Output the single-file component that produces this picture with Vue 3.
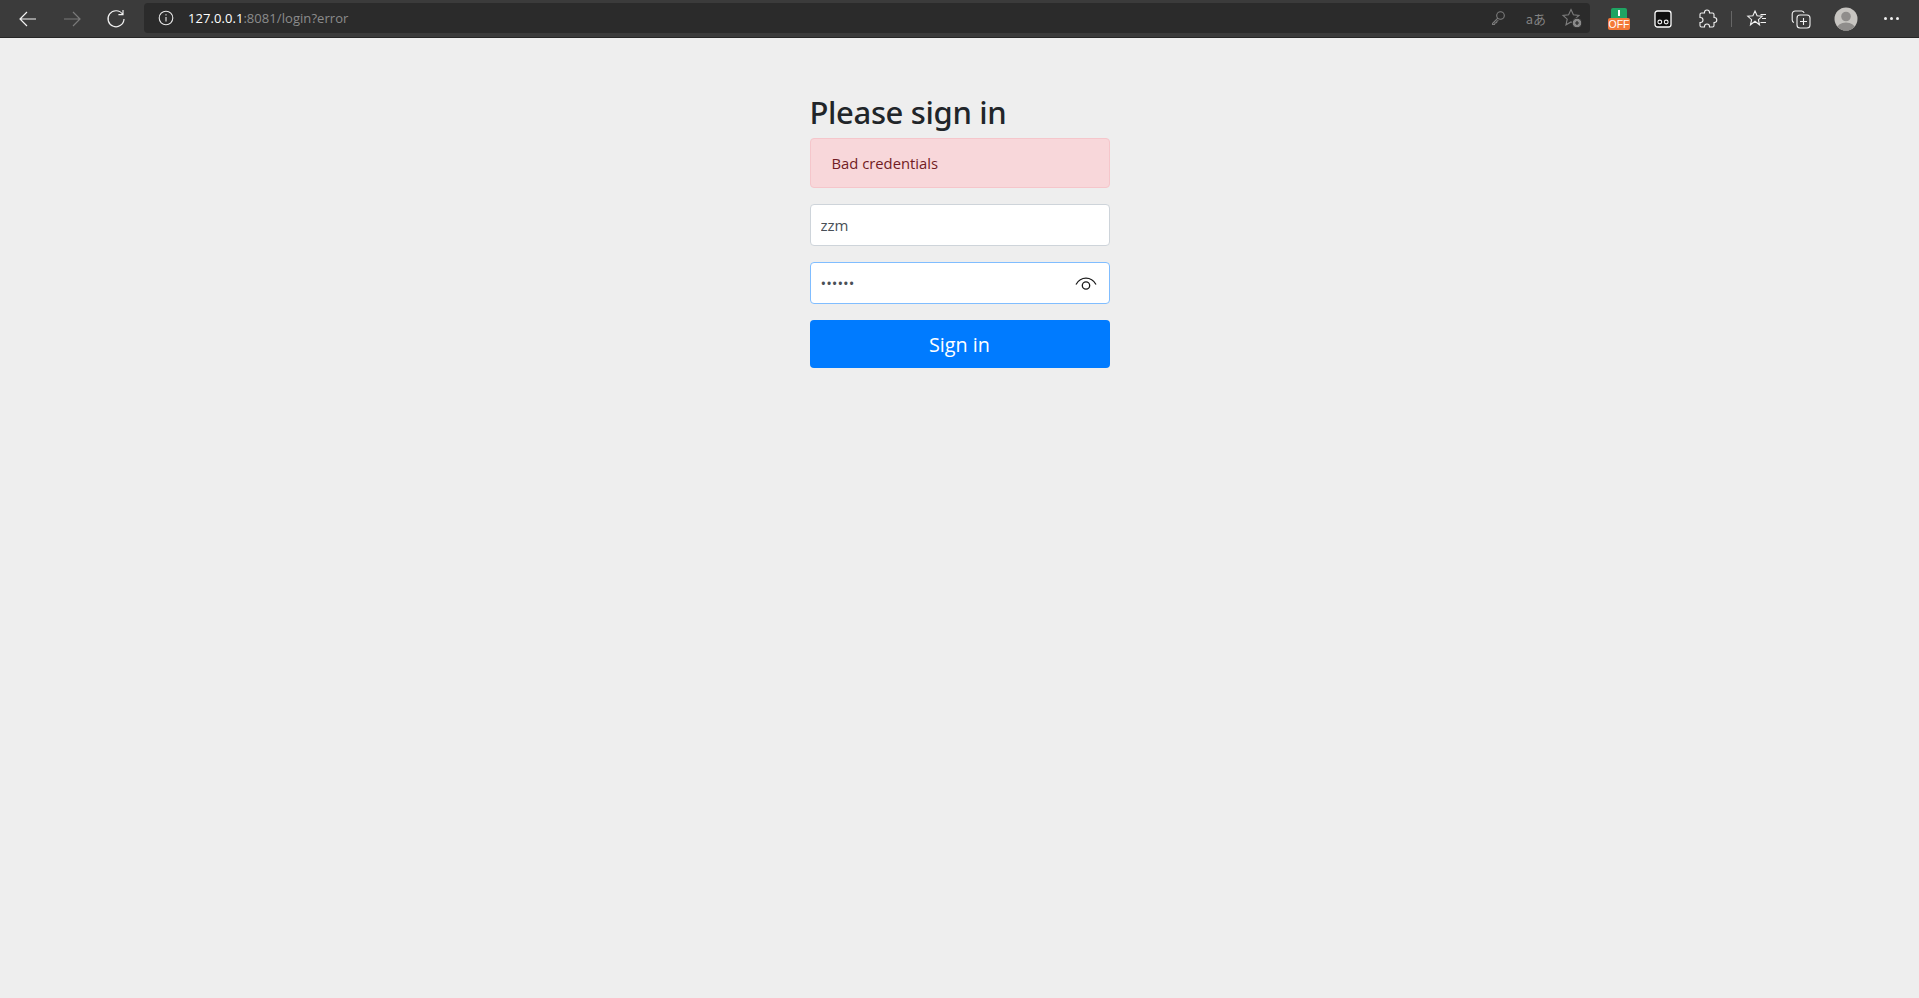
<script setup>
const leftIcons = [
  { id: 'back', cls: 'on', d: 'M19 11H3.5M10 4l-7 7 7 7' },
  { id: 'forward', cls: 'off', d: 'M3 11h15.5M12 4l7 7-7 7' },
  { id: 'reload', cls: 'on', d: 'M17.6 6.2A8 8 0 1 0 19 11M18 2v4.6h-4.6' },
]
</script>

<template>
  <div class="page">
    <header class="bar">
      <nav class="nav">
        <button v-for="i in leftIcons" :key="i.id" class="tool" :class="i.cls">
          <svg width="22" height="22" viewBox="0 0 22 22"><path :d="i.d" /></svg>
        </button>
      </nav>
      <div class="address">
        <svg class="info" width="16" height="16" viewBox="0 0 16 16">
          <circle cx="8" cy="8" r="6.8" />
          <path d="M8 7v4.5M8 4.2v1.4" />
        </svg>
        <span class="url"><b>127.0.0.1</b>:8081/login?error</span>
        <span class="grow"></span>
        <svg class="dim key" width="16" height="16" viewBox="0 0 16 16">
          <circle cx="10.5" cy="5.5" r="3.8" />
          <path d="M7.8 8.2 2.5 13.5v1h2l.6-1.6 1.5-.4.4-1.4 1.4-.5" />
        </svg>
        <span class="translate">aあ</span>
        <svg class="dim star" width="22" height="22" viewBox="0 0 22 22">
          <path d="M10 2.5l2.4 5.3 5.6.6-4.2 3.8 1.2 5.600-5-2.900-5 2.900 1.200-5.600L2 8.400l5.600-.6z" />
          <circle class="fill" cx="16" cy="16" r="4.8" />
          <path class="plus" d="M16 14v4M14 16h4" />
        </svg>
      </div>
      <div class="tools">
        <button class="tool">
          <span class="ext-off">
            <span class="ext-top"><i></i></span>
            <span class="ext-label">OFF</span>
          </span>
        </button>
        <button class="tool">
          <svg width="18" height="18" viewBox="0 0 18 18">
            <rect class="ghost" x="1" y="1" width="16" height="16" rx="2.5" />
            <circle class="eye" cx="5.8" cy="12" r="1.9" />
            <circle class="eye" cx="12.2" cy="12" r="1.9" />
          </svg>
        </button>
        <button class="tool">
          <svg width="22" height="22" viewBox="0 0 22 22">
            <path class="thin" d="M8.5 4.5a2.500 2.500 0 0 1 5 0V5h3A1.500 1.500 0 0 1 18 6.500v3h.3a2.500 2.500 0 0 1 0 5H18v3a1.500 1.500 0 0 1-1.500 1.500h-3v-.5a2.500 2.500 0 0 0-5 0v.5h-3A1.500 1.500 0 0 1 4 17.500v-3h.5a2.500 2.500 0 0 0 0-5H4v-3A1.500 1.500 0 0 1 5.500 5h3z" />
          </svg>
        </button>
        <span class="divider"></span>
        <button class="tool">
          <svg width="22" height="22" viewBox="0 0 22 22">
            <path class="thin" d="M9 3l2.100 4.800 5.100.5-3.800 3.400 1.100 5.100L9 13.200l-4.500 3.600 1.100-5.100L1.800 8.300l5.100-.5zM14.500 6.500H20M16 10.500h4M14.500 14.500H20" />
          </svg>
        </button>
        <button class="tool">
          <svg width="24" height="24" viewBox="0 0 24 24">
            <path class="thin" d="M5 15.500a2.500 2.500 0 0 1-1.800-2.400V7a3 3 0 0 1 3-3h6.500a2.500 2.500 0 0 1 2.400 2" />
            <rect class="thin" x="8" y="8" width="13" height="13" rx="3" />
            <path class="thin" d="M14.500 11v7M11 14.500h7" />
          </svg>
        </button>
        <button class="tool avatar">
          <svg width="24" height="24" viewBox="0 0 24 24">
            <defs><clipPath id="av"><circle cx="12" cy="12" r="11.500" /></clipPath></defs>
            <circle class="av-bg" cx="12" cy="12" r="11.500" />
            <g clip-path="url(#av)">
              <circle class="av-fg" cx="12" cy="9.500" r="4.800" />
              <ellipse class="av-fg" cx="12" cy="22" rx="9.500" ry="6.500" />
            </g>
          </svg>
        </button>
        <button class="tool dots">
          <i></i><i></i><i></i>
        </button>
      </div>
    </header>

    <main class="main">
      <form class="signin" @submit.prevent>
        <h2 class="heading">Please sign in</h2>
        <div class="alert">Bad credentials</div>
        <input class="field" type="text" value="zzm" readonly />
        <div class="pass">
          <input class="field focus" type="password" value="123456" readonly />
          <svg class="reveal" width="22" height="14" viewBox="0 0 22 14">
            <path d="M1 7.500C3.400 3.400 6.900 1.200 11 1.200s7.600 2.200 10 6.300" />
            <circle cx="11" cy="8.500" r="3.700" />
          </svg>
        </div>
        <button class="submit" type="submit">Sign in</button>
      </form>
    </main>
  </div>
</template>

<style>
html, body { margin: 0; background: #eeeeee; }
</style>

<style scoped>
.page {
  height: 998px;
  overflow: hidden;
  background: #eeeeee;
  font-family: "Open Sans", "Noto Sans", sans-serif;
}
.bar {
  height: 38px;
  box-sizing: border-box;
  background: #3b3b3b;
  border-bottom: 1px solid #262626;
  display: flex;
  align-items: center;
  padding-left: 6px;
}
.nav { display: flex; margin-right: 6px; }
.tool {
  width: 44px;
  height: 30px;
  padding: 0;
  border: 0;
  background: none;
  display: flex;
  align-items: center;
  justify-content: center;
  flex: none;
}
.tool svg path { fill: none; stroke-width: 1.200; }
.tool.on svg path { stroke: #f2f2f2; }
.tool.off svg path { stroke: #7a7a7a; }
.address {
  width: 1446px;
  height: 30px;
  margin-top: -1px;
  box-sizing: border-box;
  background: #2b2b2b;
  border-radius: 4px;
  display: flex;
  align-items: center;
  padding: 0 7px 0 14px;
  flex: none;
}
.info { fill: none; stroke: #e8e8e8; stroke-width: 1.100; }
.url {
  margin-left: 14px;
  font-size: 13px;
  letter-spacing: 0.06px;
  color: #8c8c8c;
  white-space: nowrap;
}
.url b { font-weight: 400; color: #ffffff; }
.grow { flex: 1; }
.dim { fill: none; stroke: #7d7d7d; stroke-width: 1.100; }
.translate {
  margin: 0 15px 0 20px;
  font-family: "Noto Sans CJK JP", "Noto Sans", sans-serif;
  font-size: 13px;
  color: #828282;
}
.star .fill { fill: #8a8a8a; stroke: #2b2b2b; stroke-width: 1; }
.star .plus { stroke: #2b2b2b; stroke-width: 1.200; }
.tools {
  display: flex;
  align-items: center;
  margin-left: 7px;
}
.ext-off {
  width: 22px;
  display: flex;
  flex-direction: column;
  align-items: center;
}
.ext-top {
  width: 16px;
  height: 10px;
  background: #1fa463;
  border-radius: 2px 2px 0 0;
  display: flex;
  justify-content: center;
}
.ext-top i { width: 2px; height: 6px; margin-top: 2px; background: #ffffff; }
.ext-label {
  width: 22px;
  height: 12px;
  background: #f47a38;
  border-radius: 2px;
  color: #ffffff;
  font-size: 10.500px;
  line-height: 12px;
  text-align: center;
}
.ghost { fill: #111111; stroke: #ffffff; stroke-width: 1.300; }
.eye { fill: none; stroke: #f2f2f2; stroke-width: 1.100; }
.tool svg .thin { fill: none; stroke: #f2f2f2; stroke-width: 1.100; }
.divider {
  width: 1px;
  height: 16px;
  margin: 0 3px 0 2px;
  background: #666666;
}
.avatar { margin-left: 1px; }
.av-bg { fill: #c7c5c1; }
.av-fg { fill: #8f8d8b; }
.dots { gap: 3px; margin-left: 1px; }
.dots i { width: 3px; height: 3px; border-radius: 50%; background: #f0f0f0; }

.main { display: flex; justify-content: center; padding-top: 52px; }
.signin { width: 300px; display: flex; flex-direction: column; }
.heading {
  margin: 0 0 4px;
  font-family: "Noto Sans", "Open Sans", sans-serif;
  font-size: 31px;
  letter-spacing: -0.35px;
  line-height: 44px;
  font-weight: 500;
  color: #212529;
}
.alert {
  height: 50px;
  box-sizing: border-box;
  margin-bottom: 16px;
  padding: 0 21px;
  border: 1px solid #f5c6cb;
  border-radius: 4px;
  background: #f8d7da;
  color: #721c24;
  font-size: 14.800px;
  line-height: 48px;
}
.field {
  display: block;
  width: 100%;
  height: 42px;
  box-sizing: border-box;
  padding: 0 10px;
  border: 1px solid #ced4da;
  border-radius: 4px;
  background: #ffffff;
  color: #495057;
  font-family: inherit;
  font-size: 15px;
  outline: none;
}
.focus { border-color: #80bdff; }
.pass { position: relative; margin: 16px 0; }
.reveal {
  position: absolute;
  right: 13px;
  top: 15px;
  fill: none;
  stroke: #1a1a1a;
  stroke-width: 1.300;
}
.submit {
  height: 48px;
  border: 0;
  border-radius: 4px;
  background: #007bff;
  color: #ffffff;
  font-family: inherit;
  font-size: 19.800px;
  padding: 0;
}
</style>
